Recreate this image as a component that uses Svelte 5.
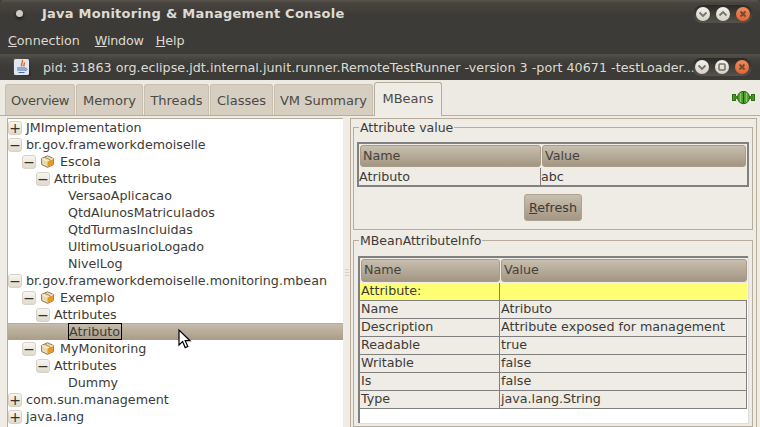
<script>
	const tabs = [
		{ label: 'Overview', width: 70 },
		{ label: 'Memory', width: 67 },
		{ label: 'Threads', width: 65 },
		{ label: 'Classes', width: 63 },
		{ label: 'VM Summary', width: 99 }
	];

	const tree = [
		{ label: 'JMImplementation', level: 0, toggle: '+' },
		{ label: 'br.gov.frameworkdemoiselle', level: 0, toggle: '-' },
		{ label: 'Escola', level: 1, toggle: '-', bean: true },
		{ label: 'Attributes', level: 2, toggle: '-' },
		{ label: 'VersaoAplicacao', level: 3 },
		{ label: 'QtdAlunosMatriculados', level: 3 },
		{ label: 'QtdTurmasIncluidas', level: 3 },
		{ label: 'UltimoUsuarioLogado', level: 3 },
		{ label: 'NivelLog', level: 3 },
		{ label: 'br.gov.frameworkdemoiselle.monitoring.mbean', level: 0, toggle: '-' },
		{ label: 'Exemplo', level: 1, toggle: '-', bean: true },
		{ label: 'Attributes', level: 2, toggle: '-' },
		{ label: 'Atributo', level: 3, selected: true },
		{ label: 'MyMonitoring', level: 1, toggle: '-', bean: true },
		{ label: 'Attributes', level: 2, toggle: '-' },
		{ label: 'Dummy', level: 3 },
		{ label: 'com.sun.management', level: 0, toggle: '+' },
		{ label: 'java.lang', level: 0, toggle: '+' }
	];

	const info = [
		['Name', 'Atributo'],
		['Description', 'Attribute exposed for management'],
		['Readable', 'true'],
		['Writable', 'false'],
		['Is', 'false'],
		['Type', 'java.lang.String']
	];
</script>

{#snippet winButtons(middle)}
	<div class="win-buttons">
		<span class="win-btn">
			<svg width="14" height="14" viewBox="0 0 14 14"><path d="M3.5 5.5 7 9l3.5-3.5" fill="none" stroke="#77736a" stroke-width="1.8" /></svg>
		</span>
		<span class="win-btn">
			{#if middle === 'up'}
				<svg width="14" height="14" viewBox="0 0 14 14"><path d="M3.5 8.5 7 5l3.5 3.5" fill="none" stroke="#77736a" stroke-width="1.8" /></svg>
			{:else}
				<svg width="14" height="14" viewBox="0 0 14 14"><rect x="4" y="4" width="6" height="6" rx="1" fill="none" stroke="#77736a" stroke-width="1.6" /></svg>
			{/if}
		</span>
		<span class="win-btn close">
			<svg width="14" height="14" viewBox="0 0 14 14"><path d="M4.5 4.5l5 5m0-5l-5 5" fill="none" stroke="#6e4a38" stroke-width="1.8" /></svg>
		</span>
	</div>
{/snippet}

<div class="window">
	<header class="titlebar">
		<span class="app-dot"></span>
		<span class="title">Java Monitoring &amp; Management Console</span>
		{@render winButtons('up')}
	</header>

	<nav class="menubar">
		<span><u>C</u>onnection</span>
		<span class="tight"><u>W</u>indow</span>
		<span><u>H</u>elp</span>
	</nav>

	<div class="inner-titlebar">
		<svg class="java-icon" width="18" height="18" viewBox="0 0 18 18">
			<defs>
				<linearGradient id="java-bg" x1="0" y1="0" x2="1" y2="1">
					<stop offset="0" stop-color="#55534e" />
					<stop offset="1" stop-color="#2c2b29" />
				</linearGradient>
			</defs>
			<rect width="18" height="18" fill="url(#java-bg)" />
			<rect x="1" y="1" width="15" height="16" rx="1.5" fill="#dfe6f2" />
			<path d="M9 2c2.4 2-2 3 0 6.5M11.2 4.5c1 1.2-1.2 2 0 4" fill="none" stroke="#dc6a28" stroke-width="1.4" />
			<path d="M4 10h8.5M4 12h8.5M5.5 14.5h6" stroke="#4a6ea8" stroke-width="1.2" />
			<path d="M12.5 10.5c2 0 2 2-.5 2" fill="none" stroke="#4a6ea8" />
		</svg>
		<span class="inner-title">pid: 31863 org.eclipse.jdt.internal.junit.runner.RemoteTestRunner -version 3 -port 40671 -testLoader...</span>
		{@render winButtons('max')}
	</div>

	<div class="tabstrip">
		{#each tabs as tab}
			<span class="tab" style="width: {tab.width}px">{tab.label}</span>
		{/each}
		<span class="tab active">MBeans</span>
		<svg class="plug" width="23" height="14" viewBox="0 0 23 14">
			<rect x="0.5" y="3.5" width="3" height="6" fill="#4f9a2c" stroke="#2c6a14" />
			<rect x="19.5" y="3.5" width="3" height="6" fill="#4f9a2c" stroke="#2c6a14" />
			<rect x="2" y="5" width="19" height="3" fill="#3f8a20" />
			<ellipse cx="11.5" cy="6.5" rx="6" ry="6.2" fill="#4f9a2c" stroke="#2c6a14" />
			<path d="M8.5 2v9M14.5 2v9" stroke="#8ccb62" stroke-width="1.4" />
			<path d="M11.5 0.5v12" stroke="#1f5a0c" />
		</svg>
	</div>

	<main class="panel">
		<section class="tree">
			{#each tree as node}
				<div class="node" class:selected={node.selected} style="padding-left: {node.level * 14}px">
					{#if node.toggle}
						<span class="toggle">{node.toggle === '+' ? '+' : '−'}</span>
					{:else}
						<span class="toggle-space"></span>
					{/if}
					{#if node.bean}
						<svg class="bean" width="13" height="13" viewBox="0 0 13 13">
							<path d="M6.5.8 12.4 3.4v6.2L6.5 12.4.6 9.6V3.4z" fill="#ecd9b0" stroke="#8f7c58" />
							<path d="M6.5 6 12 3.6v5.8L6.5 12z" fill="#ea9a20" />
							<path d="M1 3.6 6.5 6 12 3.6" fill="none" stroke="#fff6dc" />
							<path d="M3.5 2.2 9 4.7v2" fill="none" stroke="#a8936a" />
						</svg>
					{/if}
					<span class="label">{node.label}</span>
				</div>
			{/each}
		</section>

		<div class="splitter"><span class="grip"></span></div>

		<section class="details">
			<fieldset class="group value-group">
				<legend>Attribute value</legend>
				<div class="table">
					<div class="row head first-cols">
						<span class="th">Name</span>
						<span class="th">Value</span>
					</div>
					<div class="row first-cols">
						<span class="td">Atributo</span>
						<span class="td">abc</span>
					</div>
				</div>
				<button class="refresh"><u>R</u>efresh</button>
			</fieldset>

			<fieldset class="group info-group">
				<legend>MBeanAttributeInfo</legend>
				<div class="table info">
					<div class="row head info-cols">
						<span class="th">Name</span>
						<span class="th">Value</span>
					</div>
					<div class="row info-cols body yellow">
						<span class="td">Attribute:</span>
						<span class="td"></span>
					</div>
					{#each info as [name, value]}
						<div class="row info-cols body">
							<span class="td">{name}</span>
							<span class="td">{value}</span>
						</div>
					{/each}
				</div>
			</fieldset>
		</section>
	</main>

	<svg class="cursor" width="14" height="21" viewBox="0 0 14 21">
		<path d="M1 1v15l3.6-3.4 2.6 6 2.6-1.1-2.6-5.8H12z" fill="#fff" stroke="#000" stroke-width="1.2" />
	</svg>
</div>

<style>
	:global(body) {
		margin: 0;
		overflow: hidden;
	}

	.window {
		position: relative;
		width: 760px;
		height: 427px;
		overflow: hidden;
		display: flex;
		flex-direction: column;
		background: #3c3b37;
		font-family: 'DejaVu Sans', sans-serif;
		font-size: 12.7px;
		color: #3c3b37;
	}

	.titlebar {
		height: 27px;
		flex: none;
		display: flex;
		align-items: center;
		background: linear-gradient(#58544a 0, #46443e 3px, #423f3a 11px, #3c3b37 13px);
		border-radius: 4px 4px 0 0;
	}

	.app-dot {
		width: 7px;
		height: 7px;
		margin-left: 16px;
		border-radius: 50%;
		background: #cfccc4;
		box-shadow: 0 2px 3px #1c1b19;
	}

	.title {
		margin-left: 19px;
		font-size: 13px;
		font-weight: bold;
		letter-spacing: 0.24px;
		color: #dfdbd2;
	}

	.win-buttons {
		margin-left: auto;
		margin-right: 7px;
		height: 18px;
		padding: 0 3px;
		display: flex;
		align-items: center;
		gap: 6px;
		border-radius: 9px;
		background: linear-gradient(#2a2926, #55534c);
	}

	.win-btn {
		width: 14px;
		height: 14px;
		border-radius: 50%;
		background: linear-gradient(#f4f2ec, #d4d0c6);
		display: flex;
	}

	.win-btn.close {
		background: linear-gradient(#f08a5c, #e5632f);
	}

	.menubar {
		height: 27px;
		flex: none;
		display: flex;
		align-items: center;
		gap: 12px;
		padding-left: 8px;
		color: #dfdbd2;
		box-sizing: border-box;
		padding-bottom: 1px;
	}

	.menubar span:first-child {
		margin-right: 3px;
	}

	.menubar .tight {
		letter-spacing: -0.2px;
	}

	.inner-titlebar {
		height: 26px;
		flex: none;
		display: flex;
		align-items: center;
		background: linear-gradient(#55524a 0, #45433d 5px, #3c3b37 12px);
		color: #dfdbd2;
	}

	.java-icon {
		margin-left: 13px;
		flex: none;
	}

	.inner-title {
		margin-left: 12px;
		letter-spacing: 0.03px;
		white-space: nowrap;
		flex: 1;
		min-width: 0;
	}

	.inner-titlebar .win-buttons {
		margin-right: 8px;
		margin-left: 0;
		flex: none;
	}

	.tabstrip {
		height: 36px;
		flex: none;
		box-sizing: border-box;
		display: flex;
		align-items: flex-end;
		gap: 1px;
		padding-left: 5px;
		background: #edeae3;
		border-bottom: 1px solid #b8ad9b;
		position: relative;
	}

	.tab {
		height: 31px;
		box-sizing: border-box;
		padding-top: 8px;
		font-size: 13px;
		text-align: center;
		background: #d6cfc1;
		border: 1px solid #c8bfae;
		border-bottom: none;
		border-radius: 3px 3px 0 0;
		color: #4c4a46;
	}

	.tab:first-child {
		letter-spacing: -0.4px;
	}

	.tab.active {
		width: 68px;
		height: 34px;
		margin-bottom: -1px;
		background: #efebe5;
		border-color: #b8ad9b;
	}

	.plug {
		position: absolute;
		right: 5px;
		top: 11px;
	}

	.panel {
		flex: 1;
		min-height: 0;
		display: flex;
		gap: 0;
		padding: 2px 3px 0 7px;
		background: #efebe5;
	}

	.tree {
		width: 336px;
		flex: none;
		box-sizing: border-box;
		background: #fff;
		border-left: 1px solid #b8ad9b;
		border-top: 1px solid #b8ad9b;
		overflow: hidden;
	}

	.node {
		height: 17px;
		display: flex;
		align-items: center;
		white-space: nowrap;
		color: #3c3b37;
	}

	.node.selected {
		background: linear-gradient(#c8beaf, #a99c88);
		box-shadow: inset 0 1px #b8ad9b;
	}

	.toggle,
	.toggle-space {
		width: 14px;
		height: 14px;
		flex: none;
		margin-right: 4px;
		box-sizing: border-box;
	}

	.toggle {
		display: flex;
		align-items: center;
		justify-content: center;
		border: 1px solid #d8d2c6;
		border-radius: 3px;
		background: linear-gradient(#f8f6f2, #e0dacd);
		font-size: 14px;
		line-height: 1;
		color: #33322e;
	}

	.bean {
		margin: 0 6px 0 1px;
		flex: none;
	}

	.label {
		line-height: 15px;
	}

	.selected .label {
		outline: 1px solid #000;
		padding-right: 1px;
		margin-left: 1px;
		height: 15px;
	}

	.splitter {
		width: 7px;
		flex: none;
		display: flex;
		align-items: center;
		justify-content: center;
	}

	.grip {
		width: 4px;
		height: 7px;
		background: repeating-linear-gradient(#d6d0c4 0 1px, transparent 1px 3px);
	}

	.details {
		flex: 1;
		min-width: 0;
		box-sizing: border-box;
		padding: 0 3px 0 2px;
		border: 1px solid #b8ad9b;
		border-bottom: none;
		display: flex;
		flex-direction: column;
		gap: 3px;
	}

	.group {
		margin: 0;
		min-width: 0;
		box-sizing: border-box;
		padding: 0 3px;
		border: 1px solid #b8ad9b;
	}

	.group legend {
		padding: 0 1px;
		margin-left: 2px;
		font-size: 12.5px;
		line-height: 15px;
		color: #3c3b37;
	}

	.value-group {
		height: 110px;
		margin-top: 1px;
	}

	.value-group .table {
		margin-top: 7px;
	}

	.info-group {
		flex: 1;
		min-height: 0;
	}

	.table {
		border: 2px solid #808080;
		background: #efebe5;
	}

	.info {
		margin: 8px 1px 0 1px;
		border-width: 2px 0 0 2px;
		background: #fff;
		box-shadow: 1px 1px #ddd;
		height: 165px;
	}

	.row {
		display: grid;
	}

	.first-cols {
		grid-template-columns: 181px 1fr;
	}

	.info-cols {
		grid-template-columns: 139px 1fr;
	}

	.head {
		height: 24px;
		padding: 0 1px;
		gap: 1px;
		background: #efebe5;
	}

	.info .head {
		height: 25px;
	}

	.th {
		margin: 1px 0;
		padding: 1px 2px 0;
		background: linear-gradient(#c8bfb0, #a39682);
		border: 1px solid #a89c88;
		border-radius: 3px;
		color: #45423c;
		line-height: 18px;
	}

	.td {
		height: 17px;
		line-height: 17px;
		border-left: 1px solid #808080;
		white-space: nowrap;
	}

	.td:first-child {
		border-left: none;
	}

	.body {
		height: 18px;
		border-bottom: 1px solid #808080;
		border-right: 1px solid #808080;
		box-sizing: border-box;
		background: #efebe5;
		margin-right: 1px;
	}

	.body .td {
		padding-left: 1px;
		line-height: 16px;
	}

	.yellow {
		background: #ffff73;
		border-right: none;
	}

	.refresh {
		display: block;
		width: 58px;
		height: 27px;
		margin: 7px auto 0;
		padding: 0;
		font: inherit;
		color: #3c3b37;
		background: linear-gradient(#c8bfb0, #a39682);
		border: 1px solid #ada192;
		border-radius: 3px;
	}

	.cursor {
		position: absolute;
		left: 178px;
		top: 329px;
	}
</style>
